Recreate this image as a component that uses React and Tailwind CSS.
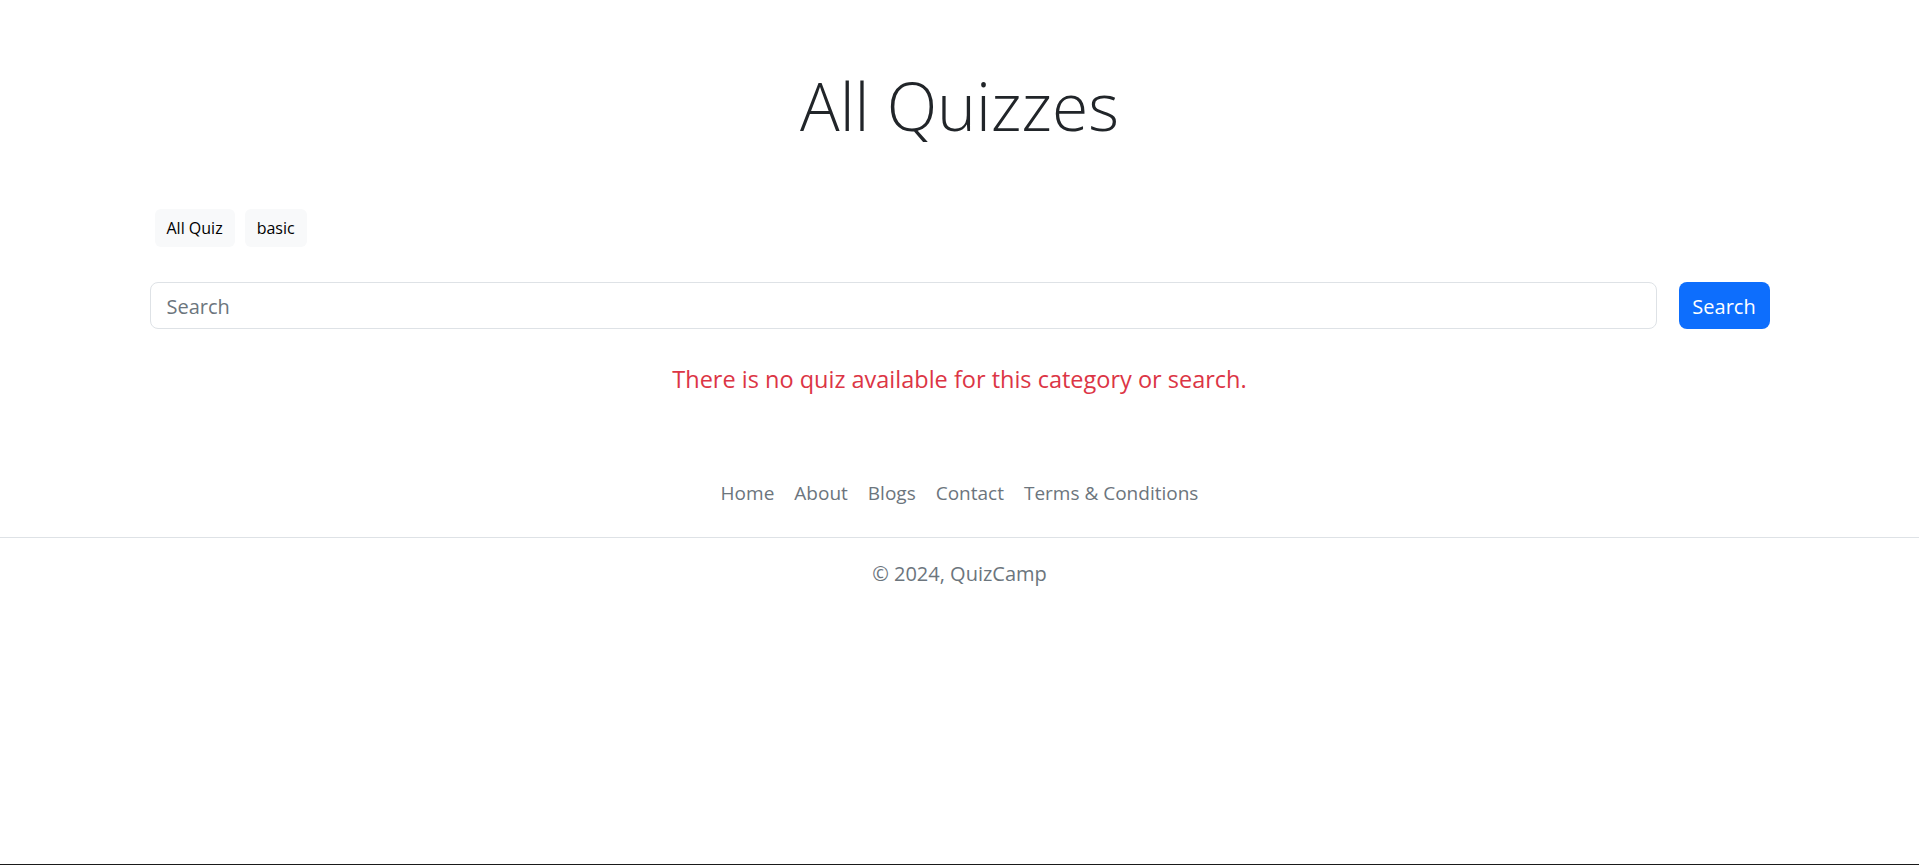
import React from "react";

export default function App() {
  return (
    <div className="h-[865px] flex flex-col bg-white font-['Open_Sans','Noto_Sans',sans-serif] text-[#212529]">
      <h1 className="mt-[62px] h-[86px] leading-[86px] text-center text-[66px] font-light text-[#212529]">
        All Quizzes
      </h1>
      <div className="w-[1620px] mx-auto">
        <div className="mt-[61px] flex gap-[10px] pl-[5px]">
          <button className="h-[38px] px-3 rounded-md bg-[#f8f9fa] text-[16px] text-black">All Quiz</button>
          <button className="h-[38px] px-3 rounded-md bg-[#f8f9fa] text-[16px] text-black">basic</button>
        </div>
        <div className="mt-[35px] flex gap-[22px]">
          <input
            type="text"
            placeholder="Search"
            className="flex-1 h-[47px] pt-[2px] border border-[#dee2e6] rounded-lg px-4 text-[20px] text-[#212529] placeholder:text-[#6c757d] outline-none"
          />
          <button className="w-[91px] h-[47px] pt-[2px] bg-[#0d6efd] text-white rounded-lg text-[20px]">Search</button>
        </div>
        <p className="mt-[32px] h-[36px] leading-[36px] text-center text-[23.5px] text-[#dc3545]">
          There is no quiz available for this category or search.
        </p>
      </div>
      <nav className="mt-[81px] flex justify-center gap-[20px] text-[19px] leading-[30px] text-[#6c757d]">
        <a>Home</a>
        <a>About</a>
        <a>Blogs</a>
        <a>Contact</a>
        <a>Terms &amp; Conditions</a>
      </nav>
      <div className="mt-[29px] border-t border-[#dee2e6]"></div>
      <p className="mt-[21px] text-center text-[20px] leading-[30px] text-[#6c757d]">© 2024, QuizCamp</p>
      <div className="mt-auto h-px bg-[#1a1a1a]"></div>
    </div>
  );
}
